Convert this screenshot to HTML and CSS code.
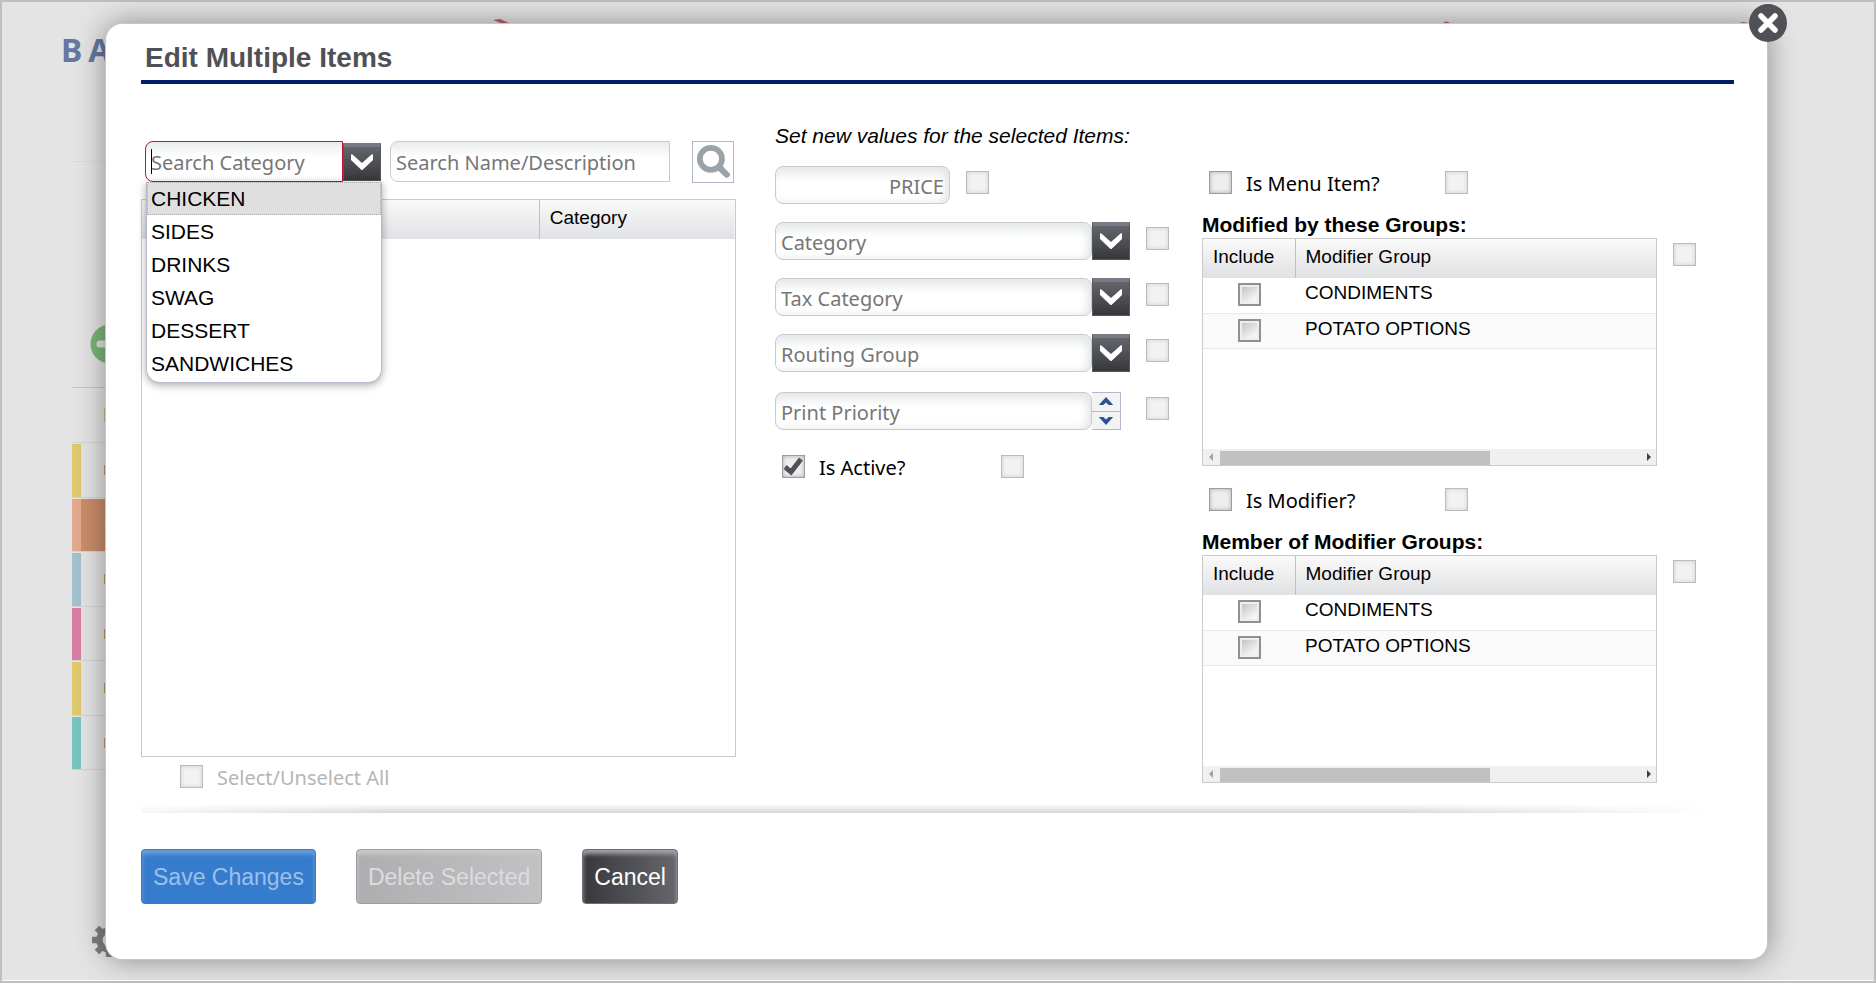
FILE: index.html
```html
<!DOCTYPE html>
<html lang="en">
<head>
<meta charset="utf-8">
<title>Edit Multiple Items</title>
<link rel="stylesheet" href="styles.css">
</head>
<body>
<svg class="defs" aria-hidden="true">
  <symbol id="chevron" viewBox="1 4 36 33"><path d="M8 11.500 Q9 11 10 12 L19 20 L28 12 Q29 11 30 11.500 V17 L20 26.500 Q19 27.500 18 26.500 L8 17 Z" fill="#fff"/></symbol>
</svg>
<div class="page">
  <div class="backdrop" aria-hidden="true">
    <div class="brand"><span>B</span><span>A</span></div>
    <svg class="marks" viewBox="0 0 1270 6"><path d="M7 1 L14 0 L25 5 H17 Z M0 4h3v1h-3z M957 4q3-3 7 0z M1254 4q3-2 7 0z" fill="#c2606c"/></svg>
    <div class="rule"></div>
    <svg class="add" viewBox="0 0 40 40"><circle cx="20" cy="20" r="19.500" fill="#7db678"/><path d="M10 20h20M20 10v20" stroke="#dfe6dd" stroke-width="7" stroke-linecap="round"/></svg>
    <div class="list-head"><i class="sliver"></i></div>
    <ul class="list">
      <li class="yellow"><i class="sliver"></i></li>
      <li class="orange"><i class="sliver"></i></li>
      <li class="blue"><i class="sliver"></i></li>
      <li class="pink"><i class="sliver"></i></li>
      <li class="yellow"><i class="sliver"></i></li>
      <li class="teal"><i class="sliver"></i></li>
    </ul>
    <svg class="gear" viewBox="0 0 32 32"><circle cx="16" cy="16" r="9" fill="none" stroke="#7d7e80" stroke-width="6"/><path d="M16 0v6M16 26v6M0 16h6M26 16h6M4.700 4.700l4.300 4.300M23 23l4.300 4.300M4.700 27.300L9 23M23 9l4.300-4.300" stroke="#7d7e80" stroke-width="6"/></svg>
  </div>

  <main class="modal" role="dialog" aria-labelledby="title">
    <button class="close" type="button" aria-label="Close">
      <svg viewBox="0 0 38 38"><circle cx="19" cy="19" r="19" fill="#505156"/><path d="M12 12 L26 26 M26 12 L12 26" stroke="#fff" stroke-width="5.500" stroke-linecap="round"/></svg>
    </button>
    <h1 id="title">Edit Multiple Items</h1>
    <div class="columns">
      <section class="find">
        <div class="search">
          <div class="combo">
            <input class="field active" type="text" placeholder="Search Category" aria-label="Search Category">
            <i class="caret"></i>
            <button class="arrow" type="button" aria-label="Open categories"><svg><use href="#chevron"/></svg></button>
            <ul class="menu" role="listbox" aria-label="Categories">
              <li role="option" aria-selected="true" class="current">CHICKEN</li>
              <li role="option">SIDES</li>
              <li role="option">DRINKS</li>
              <li role="option">SWAG</li>
              <li role="option">DESSERT</li>
              <li role="option">SANDWICHES</li>
            </ul>
          </div>
          <input class="field name" type="text" placeholder="Search Name/Description" aria-label="Search Name/Description">
          <button class="go" type="button" aria-label="Search">
            <svg viewBox="0 0 38 38"><circle cx="17" cy="16" r="10.500" fill="none" stroke="#9aa3a7" stroke-width="5.500"/><path d="M25 24 L32 31" stroke="#9aa3a7" stroke-width="6" stroke-linecap="round"/></svg>
          </button>
        </div>
        <div class="grid items">
          <table>
            <thead><tr><th class="item-name"></th><th>Category</th></tr></thead>
          </table>
        </div>
        <label class="check-label all"><input class="check" type="checkbox" disabled><span>Select/Unselect All</span></label>
      </section>

      <section class="values">
        <p class="hint">Set new values for the selected Items:</p>
        <div class="row">
          <input class="field inset price" type="text" placeholder="PRICE" aria-label="Price">
          <input class="check faint" type="checkbox" aria-label="Change price">
        </div>
        <div class="row">
          <input class="field inset" type="text" placeholder="Category" aria-label="Category">
          <button class="arrow" type="button" aria-label="Open category"><svg><use href="#chevron"/></svg></button>
          <input class="check faint" type="checkbox" aria-label="Change category">
        </div>
        <div class="row">
          <input class="field inset" type="text" placeholder="Tax Category" aria-label="Tax Category">
          <button class="arrow" type="button" aria-label="Open tax category"><svg><use href="#chevron"/></svg></button>
          <input class="check faint" type="checkbox" aria-label="Change tax category">
        </div>
        <div class="row">
          <input class="field inset" type="text" placeholder="Routing Group" aria-label="Routing Group">
          <button class="arrow" type="button" aria-label="Open routing group"><svg><use href="#chevron"/></svg></button>
          <input class="check faint" type="checkbox" aria-label="Change routing group">
        </div>
        <div class="row last">
          <input class="field inset" type="text" placeholder="Print Priority" aria-label="Print Priority">
          <div class="spinner">
            <button type="button" aria-label="Increase"><svg viewBox="0 0 16 10"><path d="M0 9 L8 0 L16 9 H11 L8 6 L5 9 Z" fill="#2f5192"/></svg></button>
            <button type="button" aria-label="Decrease"><svg viewBox="0 0 16 10"><path d="M0 1 L8 10 L16 1 H11 L8 4 L5 1 Z" fill="#2f5192"/></svg></button>
          </div>
          <input class="check faint" type="checkbox" aria-label="Change print priority">
        </div>
        <div class="flag">
          <label class="check-label"><input class="check ticked" type="checkbox" checked><span>Is Active?</span></label>
          <input class="check faint" type="checkbox" aria-label="Change active">
        </div>
      </section>

      <section class="groups">
        <div class="flag">
          <label class="check-label"><input class="check" type="checkbox"><span>Is Menu Item?</span></label>
          <input class="check faint" type="checkbox" aria-label="Change menu item">
        </div>
        <h2>Modified by these Groups:</h2>
        <div class="group">
          <div class="grid">
            <table>
              <thead><tr><th class="include">Include</th><th>Modifier Group</th></tr></thead>
              <tbody>
                <tr><td><input class="check boxed" type="checkbox" aria-label="Include CONDIMENTS"></td><td>CONDIMENTS</td></tr>
                <tr><td><input class="check boxed" type="checkbox" aria-label="Include POTATO OPTIONS"></td><td>POTATO OPTIONS</td></tr>
              </tbody>
            </table>
            <div class="scroll"><i class="left"></i><span class="track"><b></b></span><i class="right"></i></div>
          </div>
          <input class="check faint" type="checkbox" aria-label="Change modified-by groups">
        </div>
        <div class="flag second">
          <label class="check-label"><input class="check" type="checkbox"><span>Is Modifier?</span></label>
          <input class="check faint" type="checkbox" aria-label="Change modifier">
        </div>
        <h2>Member of Modifier Groups:</h2>
        <div class="group">
          <div class="grid">
            <table>
              <thead><tr><th class="include">Include</th><th>Modifier Group</th></tr></thead>
              <tbody>
                <tr><td><input class="check boxed" type="checkbox" aria-label="Member of CONDIMENTS"></td><td>CONDIMENTS</td></tr>
                <tr><td><input class="check boxed" type="checkbox" aria-label="Member of POTATO OPTIONS"></td><td>POTATO OPTIONS</td></tr>
              </tbody>
            </table>
            <div class="scroll"><i class="left"></i><span class="track"><b></b></span><i class="right"></i></div>
          </div>
          <input class="check faint" type="checkbox" aria-label="Change member groups">
        </div>
      </section>
    </div>
    <div class="divider"></div>
    <div class="actions">
      <button class="btn save" type="button" disabled>Save Changes</button>
      <button class="btn delete" type="button" disabled>Delete Selected</button>
      <button class="btn cancel" type="button">Cancel</button>
    </div>
  </main>
</div>
</body>
</html>
```
FILE: styles.css
```css
* { box-sizing: border-box; }
body { margin: 0; font-family: "Liberation Sans", Arial, sans-serif; font-size: 19px; color: #000; }
ul { list-style: none; margin: 0; padding: 0; }
button, input { font: inherit; margin: 0; padding: 0; }
svg { display: block; }
.defs { position: absolute; width: 0; height: 0; }

.page { position: relative; min-height: 100vh; border: 2px solid #bfbfbf; background: #e4e4e4; box-shadow: inset 0 -1px #fff; display: flow-root; }

/* Page behind the dialog */
.backdrop { position: absolute; inset: 0; overflow: hidden; padding-left: 70px; }
.brand { position: absolute; left: 59px; top: 29px; display: flex; gap: 6px; font: bold 32px/38px "Noto Sans", sans-serif; color: #6678a0; }
.marks { position: absolute; left: 484px; top: 17px; width: 1270px; height: 6px; }
.rule { height: 1px; width: 40px; margin-top: 159px; background: #dcdcdc; }
.add { width: 40px; height: 40px; margin: 162px 0 23px 18px; }
.list-head { height: 56px; width: 60px; border-top: 1px solid #c8c8c8; border-bottom: 1px solid #d6d6d6; }
.list { display: flex; flex-direction: column; width: 60px; height: 327px; }
.list li { flex: 1; border-bottom: 1px solid #d4d4d4; border-top: 1px solid #e4e4e4; }
.list li, .list-head { display: flex; align-items: center; }
.list li::before { content: ""; width: 9px; align-self: stretch; background: var(--tone); }
.sliver { width: 2px; height: 10px; margin-left: 23px; background: #b99b6c; }
.list-head .sliver { margin-left: 32px; height: 14px; background: #d0b890; }
.yellow { --tone: #dec96b; }
.orange { --tone: #e3ab8e; background: #c98d6b; }
.blue { --tone: #a3c0cf; }
.pink { --tone: #d87da7; }
.teal { --tone: #78c6bf; }
.gear { width: 34px; height: 34px; margin: 153px 0 0 20px; }

/* Dialog */
.modal { position: relative; margin: 22px 107px 22px 104px; padding: 17px 33px 55px 35px; background: #fff; border-radius: 16px; box-shadow: 0 0 0 1px #c6c6c6, 0 0 30px rgba(0,0,0,.42); }
.close { position: absolute; right: -20px; top: -20px; width: 38px; height: 38px; border: 0; background: none; }
.close svg { width: 38px; height: 38px; }
h1 { margin: 0; padding: 0 4px 5px; font-size: 28px; line-height: 34px; color: #505156; border-bottom: 4px solid #001f66; }
.columns { display: grid; grid-template-columns: 634fr 427fr 532fr; }
.find { padding: 57px 39px 0 0; }
.values { padding: 40px 33px 0 0; }
.groups { padding: 87px 38px 0 0; }

.field { display: block; flex: 1; min-width: 0; width: 100%; height: 38px; padding: 2px 5px 0; font: 20px/28px "Noto Sans", Tahoma, sans-serif; color: #333; background: linear-gradient(#e9ecec, #fff 40%); border: 1px solid #c8cacb; border-radius: 8px; }
.field::placeholder { color: #767676; opacity: 1; }
.inset { box-shadow: inset -4px 0 8px #e4e6e6; }
.price { flex: 0 0 175px; text-align: right; }
.arrow { flex: none; width: 38px; height: 38px; border: 1px solid #55575c; border-top: 4px solid #777a85; background: linear-gradient(#64656a, #37383c); }
.arrow svg { width: 36px; height: 33px; }

.search { display: flex; align-items: flex-start; height: 42px; padding: 0 2px 0 4px; }
.combo { position: relative; display: flex; align-items: center; flex: 0 0 236px; }
.search .field { height: 41px; border-radius: 8px 0 0 8px; }
.search .name { flex: 1; margin: 0 22px 0 9px; }
.search .active { border-color: #c4122f; }
.caret { position: absolute; left: 6px; top: 8px; width: 1px; height: 25px; background: #000; }
.go { flex: none; width: 42px; height: 42px; border: 1px solid #b4b6c6; background: #fff; }
.go svg { width: 40px; height: 40px; }
.menu { position: absolute; z-index: 1; left: 1px; right: -1px; top: 41px; height: 201px; background: #fff; border: 1px solid #b8bacb; border-top: 0; border-radius: 0 0 14px 14px; box-shadow: 0 2px 8px rgba(0,0,0,.35); font-size: 21px; line-height: 33px; }
.menu li { padding-left: 4px; height: 33px; }
.menu .current { background: #dfdfdf; outline: 1px dotted #aaa; outline-offset: -1px; }

.grid { display: flex; flex-direction: column; justify-content: space-between; height: 228px; border: 1px solid #c9cacb; background: #fff; flex: 1; }
.items { height: 558px; margin-top: 16px; }
table { width: 100%; border-collapse: collapse; table-layout: fixed; }
thead tr { height: 39px; background: linear-gradient(#fafafa, #e0e1e3); }
th { padding: 0 0 3px 10px; font-weight: normal; text-align: left; }
th + th { border-left: 1px solid #bfc0c2; }
.item-name { width: 67%; }
.include { width: 92px; }
tbody tr { height: 35px; border-bottom: 1px solid #e8e8e8; }
tbody tr:nth-child(2) { background: #fafafa; }
td { padding: 4px 0 0 10px; vertical-align: top; line-height: 22px; }
td:first-child { padding: 5px 0 0; }
.scroll { display: flex; align-items: center; gap: 5px; height: 16px; padding: 0 5px 0 6px; background: #f0f0f0; }
.track { flex: 1; align-self: stretch; padding-top: 2px; }
.track b { display: block; width: 64%; height: 14px; background: #c1c1c1; }
.left, .right { border: 4px solid transparent; }
.left { border-left: 0; border-right-color: #a3a3a3; margin-right: 2px; }
.right { border-right: 0; border-left-color: #404040; }

.check { appearance: none; display: block; flex: none; width: 23px; height: 23px; border: 1px solid #9a9d9f; background: #eee; box-shadow: inset 0 0 4px #aaa; }
.faint, .check:disabled { border-color: #b9bbbc; background: #f2f2f2; box-shadow: inset 0 0 4px #d0d0d0; }
.boxed { margin: 0 auto; border: 2px solid #8f9191; background: linear-gradient(145deg, #b9bec6, #f4f4f4 75%) padding-box; box-shadow: inset 0 0 0 2px #eee; }
.ticked { background: #eee url("data:image/svg+xml,%3Csvg xmlns='http://www.w3.org/2000/svg' viewBox='0 0 21 21'%3E%3Cpath d='M2 11l6 5L18 3' fill='none' stroke='%23505156' stroke-width='5'/%3E%3C/svg%3E") center / 21px; }
.check-label { display: flex; align-items: center; gap: 14px; height: 23px; font: 20px/24px "Noto Sans", Tahoma, sans-serif; }
.check-label span { padding-top: 3px; }
.all { margin: 8px 0 0 39px; color: #b5b5b5; }

.hint { margin: 0 0 18px; font-size: 21px; line-height: 24px; font-style: italic; }
.row { display: flex; align-items: flex-start; margin-bottom: 18px; }
.row .faint { margin: 5px 0 0 16px; }
.row.last { margin: 20px 0 25px; }
.row.last .faint { margin-left: 25px; }
.spinner { width: 29px; height: 38px; display: grid; border: 1px solid #b4b6cf; border-left: 0; }
.spinner button { display: grid; place-items: center; border: 0; background: #f3f3f5; }
.spinner button + button { border-top: 1px solid #b4b6cf; }
.spinner svg { width: 16px; height: 9px; }
.flag { display: flex; padding-left: 7px; }
.flag .check-label { width: 236px; }
.values .check-label { width: 219px; }
h2 { margin: 19px 0 1px; font-size: 21px; line-height: 24px; }
.group { display: flex; align-items: flex-start; gap: 16px; }
.group > .faint { margin-top: 5px; }
.second { margin-top: 22px; }

.divider { height: 9px; margin: 16px 25px 0 0; background: linear-gradient(90deg, rgba(255,255,255,.8), transparent 16%, transparent 80%, #fff), linear-gradient(#fff, #d6d6d6); }
.actions { display: flex; gap: 40px; margin-top: 36px; }
.btn { height: 55px; padding: 2px 11px 0; font-size: 23px; border: 1px solid; border-radius: 4px; }
.save { color: #9cc0ea; background: #357ccd; border-color: #357ccd; box-shadow: inset 0 4px 4px #6a9fdb; }
.delete { color: #dcdcde; background: linear-gradient(90deg, #aeaeb0, #c1c2c4); border-color: #9c9ca4; box-shadow: inset 0 4px 4px #c9caca; }
.cancel { color: #fff; background: linear-gradient(90deg, #38393d, #66676c); border-color: #6c6e78; box-shadow: inset 0 4px 4px #a2a3a8; }
```
